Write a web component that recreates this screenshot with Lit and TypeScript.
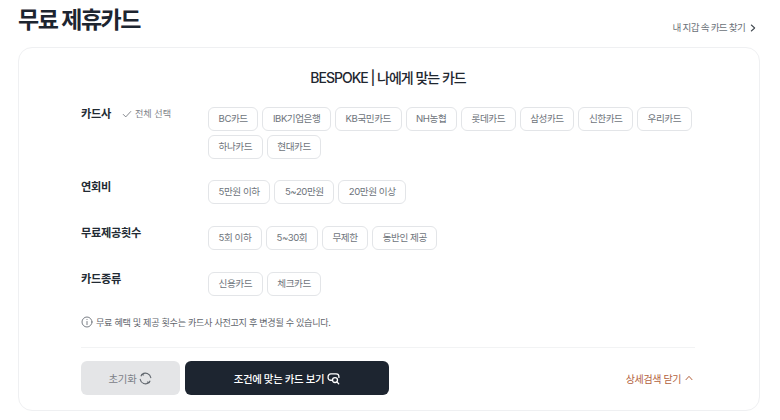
import { LitElement, html, css, svg } from "lit";
import { customElement } from "lit/decorators.js";

const rows: { label: string; all?: boolean; chips: string[] }[] = [
  { label: "카드사", all: true, chips: ["BC카드", "IBK기업은행", "KB국민카드", "NH농협", "롯데카드", "삼성카드", "신한카드", "우리카드", "하나카드", "현대카드"] },
  { label: "연회비", chips: ["5만원 이하", "5~20만원", "20만원 이상"] },
  { label: "무료제공횟수", chips: ["5회 이하", "5~30회", "무제한", "동반인 제공"] },
  { label: "카드종류", chips: ["신용카드", "체크카드"] },
];

@customElement("app-root")
export class AppRoot extends LitElement {
  static styles = css`
    :host { display: block; width: 780px; height: 420px; overflow: hidden; background: #fff; font-family: Inter, "Noto Sans CJK KR", sans-serif; color: #1d2530; }
    * { box-sizing: border-box; }
    .page { padding: 0 20px 0 18px; }
    .head { display: flex; justify-content: space-between; align-items: flex-start; height: 47px; }
    h1 { margin: 0; font-size: 23px; line-height: 40px; font-weight: 700; letter-spacing: -1.5px; }
    .find { display: flex; align-items: center; gap: 4px; margin-top: 20px; padding-right: 3px; font-size: 9.6px; line-height: 16px; color: #6b7178; letter-spacing: -0.75px; }
    .card { height: 364px; border: 1px solid #eff0f2; border-radius: 14px; padding: 20px 64px 0 62px; }
    h2 { margin: 0; height: 20px; font-size: 14px; line-height: 20px; font-weight: 500; text-align: center; letter-spacing: -1px; color: #1f2730; }
    .rows { margin-top: 19px; display: flex; flex-direction: column; gap: 22px; }
    .row { display: flex; }
    .row:first-child { margin-bottom: -1px; }
    .lab { width: 127px; flex: none; display: flex; align-items: center; height: 14px; gap: 11px; font-size: 11.2px; font-weight: 700; line-height: 14px; letter-spacing: -0.3px; color: #222a33; }
    .all { display: flex; align-items: center; gap: 3px; font-size: 9.1px; font-weight: 400; letter-spacing: 0; color: #7d8288; }
    .chips { display: flex; flex-wrap: wrap; gap: 4px; flex: 1; min-width: 0; }
    .chip { height: 24px; padding: 0 9.6px; border: 1px solid #e3e5e8; border-radius: 6px; font-size: 9.6px; line-height: 22px; letter-spacing: -0.45px; color: #6e747b; white-space: nowrap; background: #fff; }
    .note { margin-top: 19px; display: flex; align-items: center; gap: 3px; height: 14px; font-size: 9.1px; letter-spacing: -0.3px; color: #5f656c; }
    hr { margin: 18px 0 0; border: 0; border-top: 1px solid #f2f3f4; }
    .actions { margin-top: 13px; display: flex; align-items: center; gap: 5px; }
    .btn { height: 34px; border: 0; border-radius: 6px; display: flex; align-items: center; justify-content: center; gap: 3px; font: inherit; font-size: 10.4px; letter-spacing: -0.3px; }
    .reset { width: 99px; background: #e4e5e7; color: #7c8187; }
    .go { width: 204px; background: #1d2530; color: #fff; font-weight: 500; }
    .close { margin-left: auto; padding-right: 2px; display: flex; align-items: center; gap: 4px; font-size: 10px; letter-spacing: -0.4px; color: #b3623e; }
  `;

  private ico(w: number, body: unknown, color: string, sw = 1.2) {
    return html`<svg width=${w} height=${w} viewBox="0 0 12 12" fill="none" stroke=${color} stroke-width=${sw} stroke-linecap="round" stroke-linejoin="round">${body}</svg>`;
  }

  render() {
    return html`<div class="page">
      <div class="head">
        <h1>무료 제휴카드</h1>
        <div class="find">내 지갑 속 카드 찾기 ${this.ico(8, svg`<path d="M3.5 1.5 8.5 6 3.5 10.5"/>`, "#444b52", 1.6)}</div>
      </div>
      <div class="card">
        <h2>BESPOKE | 나에게 맞는 카드</h2>
        <div class="rows">
          ${rows.map(r => html`<div class="row">
            <div class="lab"><span>${r.label}</span>${r.all ? html`<span class="all">${this.ico(10, svg`<path d="M1.5 6.5 4.5 9.5 10.5 3"/>`, "#6d7278", 1)}전체 선택</span>` : ""}</div>
            <div class="chips">${r.chips.map(c => html`<span class="chip">${c}</span>`)}</div>
          </div>`)}
        </div>
        <div class="note">${this.ico(12, svg`<circle cx="6" cy="6" r="5"/><path d="M6 5.5V8.6M6 3.4v.1"/>`, "#6b7178", 0.9)}무료 혜택 및 제공 횟수는 카드사 사전고지 후 변경될 수 있습니다.</div>
        <hr />
        <div class="actions">
          <button class="btn reset">초기화 ${this.ico(13, svg`<path d="M10.9 5.2A5 5 0 0 0 2.8 2.2M1.1 6.8A5 5 0 0 0 9.2 9.8"/><path d="M1.9 3.6 2.8 2.2 4.3 2.7M10.1 8.4 9.2 9.8 7.7 9.3"/>`, "#5f656c", 1)}</button>
          <button class="btn go">조건에 맞는 카드 보기 ${this.ico(13, svg`<path d="M1 5.2V4.4A2.6 2.6 0 0 1 3.6 1.8H8.4A2.6 2.6 0 0 1 11 4.4V5M1 5.2A2.4 2.4 0 0 0 3.4 7.6H4.2"/><circle cx="7.4" cy="7.4" r="2.3"/><path d="M9.1 9.1 10.8 10.8"/>`, "#fff", 1.2)}</button>
          <div class="close">상세검색 닫기 ${this.ico(8, svg`<path d="M1.5 8.5 6 3.5 10.5 8.5"/>`, "#b3623e", 1.5)}</div>
        </div>
      </div>
    </div>`;
  }
}
